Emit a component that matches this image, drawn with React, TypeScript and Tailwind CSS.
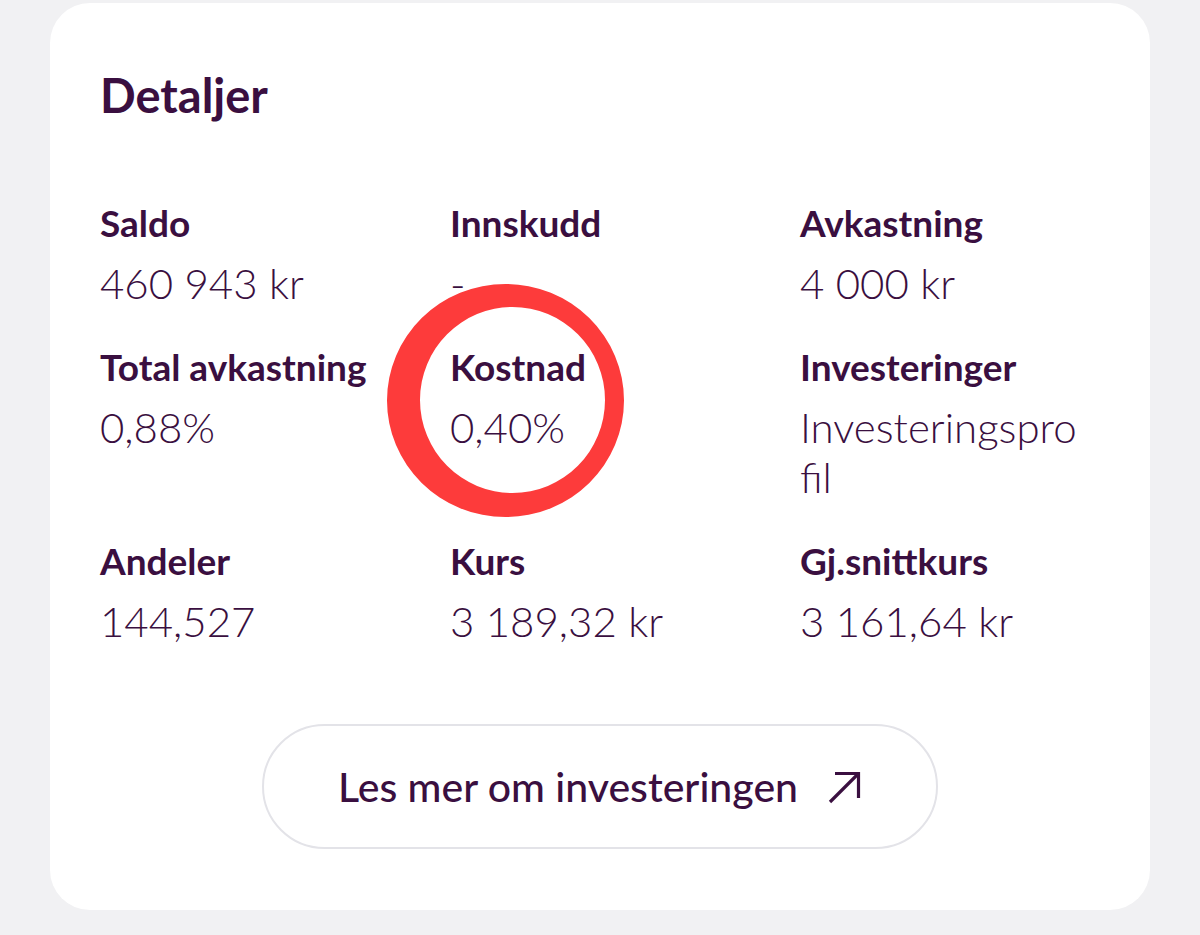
import React from "react";

const items: { label: string; value: string }[] = [
  { label: "Saldo", value: "460 943 kr" },
  { label: "Innskudd", value: "-" },
  { label: "Avkastning", value: "4 000 kr" },
  { label: "Total avkastning", value: "0,88%" },
  { label: "Kostnad", value: "0,40%" },
  { label: "Investeringer", value: "Investeringsprofil" },
  { label: "Andeler", value: "144,527" },
  { label: "Kurs", value: "3 189,32 kr" },
  { label: "Gj.snittkurs", value: "3 161,64 kr" },
];

export default function App() {
  return (
    <div
      className="w-[1200px] h-[935px] bg-[#f1f1f3] pt-[3px] px-[50px] text-[#3a0f40]"
      style={{ fontFamily: "Lato, 'Noto Sans', sans-serif" }}
    >
      <div className="relative bg-white rounded-[40px] h-[907px] pl-[50px] pr-[50px] pt-[64px]">
        <h1 className="text-[47px] leading-[56px] font-bold">Detaljer</h1>
        <div className="grid grid-cols-3 gap-x-[50px] gap-y-[37px] mt-[78px]">
          {items.map((it) => (
            <div key={it.label} className="flex flex-col">
              <div className="text-[37px] leading-[44px] font-bold whitespace-nowrap">{it.label}</div>
              <div className="mt-[13px] text-[42px] leading-[50px] font-light break-all max-w-[285px]">{it.value}</div>
            </div>
          ))}
        </div>
        <div className="flex justify-center mt-[78px]">
          <button className="flex items-center justify-center gap-[28px] w-[676px] h-[125px] rounded-full border-2 border-[#e3e3e8] text-[41px] font-medium text-[#3a0f40]">
            <span>Les mer om investeringen</span>
            <svg width="36" height="36" viewBox="0 0 36 36" fill="none" stroke="currentColor" strokeWidth="3.2" strokeLinecap="butt" strokeLinejoin="miter">
              <path d="M4 33 L32 5" />
              <path d="M9 4.5 H32.5 V29" />
            </svg>
          </button>
        </div>
        <svg
          className="absolute left-[325px] top-[272px]"
          width="260"
          height="255"
          viewBox="0 0 260 255"
        >
          <path
            fillRule="evenodd"
            fill="#fd3b3b"
            d="M12 125.5 a118.5 116.5 0 1 0 237 0 a118.5 116.5 0 1 0 -237 0 Z M45 125 a92.5 93 0 1 0 185 0 a92.5 93 0 1 0 -185 0 Z"
          />
        </svg>
      </div>
    </div>
  );
}
